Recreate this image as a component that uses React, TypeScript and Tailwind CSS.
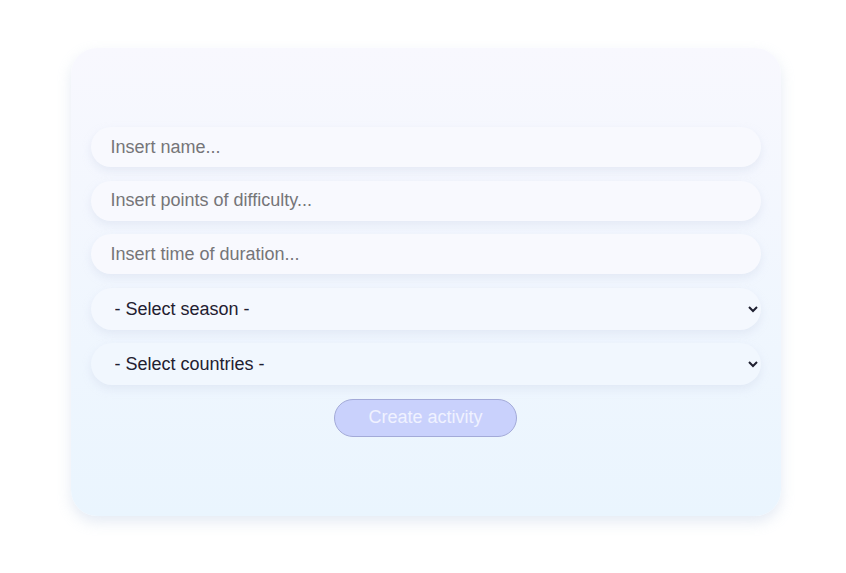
import { useState } from 'react';

export default function App() {
  const [name, setName] = useState('');
  const [difficulty, setDifficulty] = useState('');
  const [duration, setDuration] = useState('');
  const [season, setSeason] = useState('');
  const [country, setCountry] = useState('');

  const ready = name && difficulty && duration && season && country;

  const field =
    'h-10 w-full rounded-full bg-[#f8f9fe] px-5 text-[18px] text-[#1f2030] placeholder:text-[#757578] shadow-[0_4px_8px_rgba(200,210,230,0.35)] outline-none';

  return (
    <div
      className="flex min-h-screen justify-center bg-white pl-[5px] pt-12"
      style={{ fontFamily: '"Liberation Sans", Arial, sans-serif' }}
    >
      <form
        onSubmit={(e) => e.preventDefault()}
        className="flex h-[468px] w-[710px] flex-col justify-center gap-[13.5px] rounded-[26px] bg-gradient-to-b from-[#f8f8fe] to-[#eaf5fe] px-5 shadow-[0_6px_14px_rgba(170,190,220,0.3)]"
      >
        <input className={field} placeholder="Insert name..." value={name} onChange={(e) => setName(e.target.value)} />
        <input
          className={field}
          placeholder="Insert points of difficulty..."
          value={difficulty}
          onChange={(e) => setDifficulty(e.target.value)}
        />
        <input
          className={field}
          placeholder="Insert time of duration..."
          value={duration}
          onChange={(e) => setDuration(e.target.value)}
        />
        <select
          className="h-[42px] w-full rounded-full bg-[#f4f8fe] px-5 text-[18px] text-[#1f2030] shadow-[0_4px_8px_rgba(200,210,230,0.35)] outline-none"
          value={season}
          onChange={(e) => setSeason(e.target.value)}
        >
          <option value="">- Select season -</option>
          <option value="summer">Summer</option>
          <option value="autumn">Autumn</option>
          <option value="winter">Winter</option>
          <option value="spring">Spring</option>
        </select>
        <select
          className="h-[42px] w-full rounded-full bg-[#f1f7fe] px-5 text-[18px] text-[#1f2030] shadow-[0_4px_8px_rgba(200,210,230,0.35)] outline-none"
          value={country}
          onChange={(e) => setCountry(e.target.value)}
        >
          <option value="">- Select countries -</option>
          <option value="ar">Argentina</option>
          <option value="br">Brazil</option>
          <option value="cl">Chile</option>
        </select>
        <button
          type="submit"
          disabled={!ready}
          className="mx-auto h-[38px] w-[183px] rounded-full border border-[#a3aad8] bg-[#c9d1fc] text-[18px] text-[#f0f2ff]"
        >
          Create activity
        </button>
      </form>
    </div>
  );
}
